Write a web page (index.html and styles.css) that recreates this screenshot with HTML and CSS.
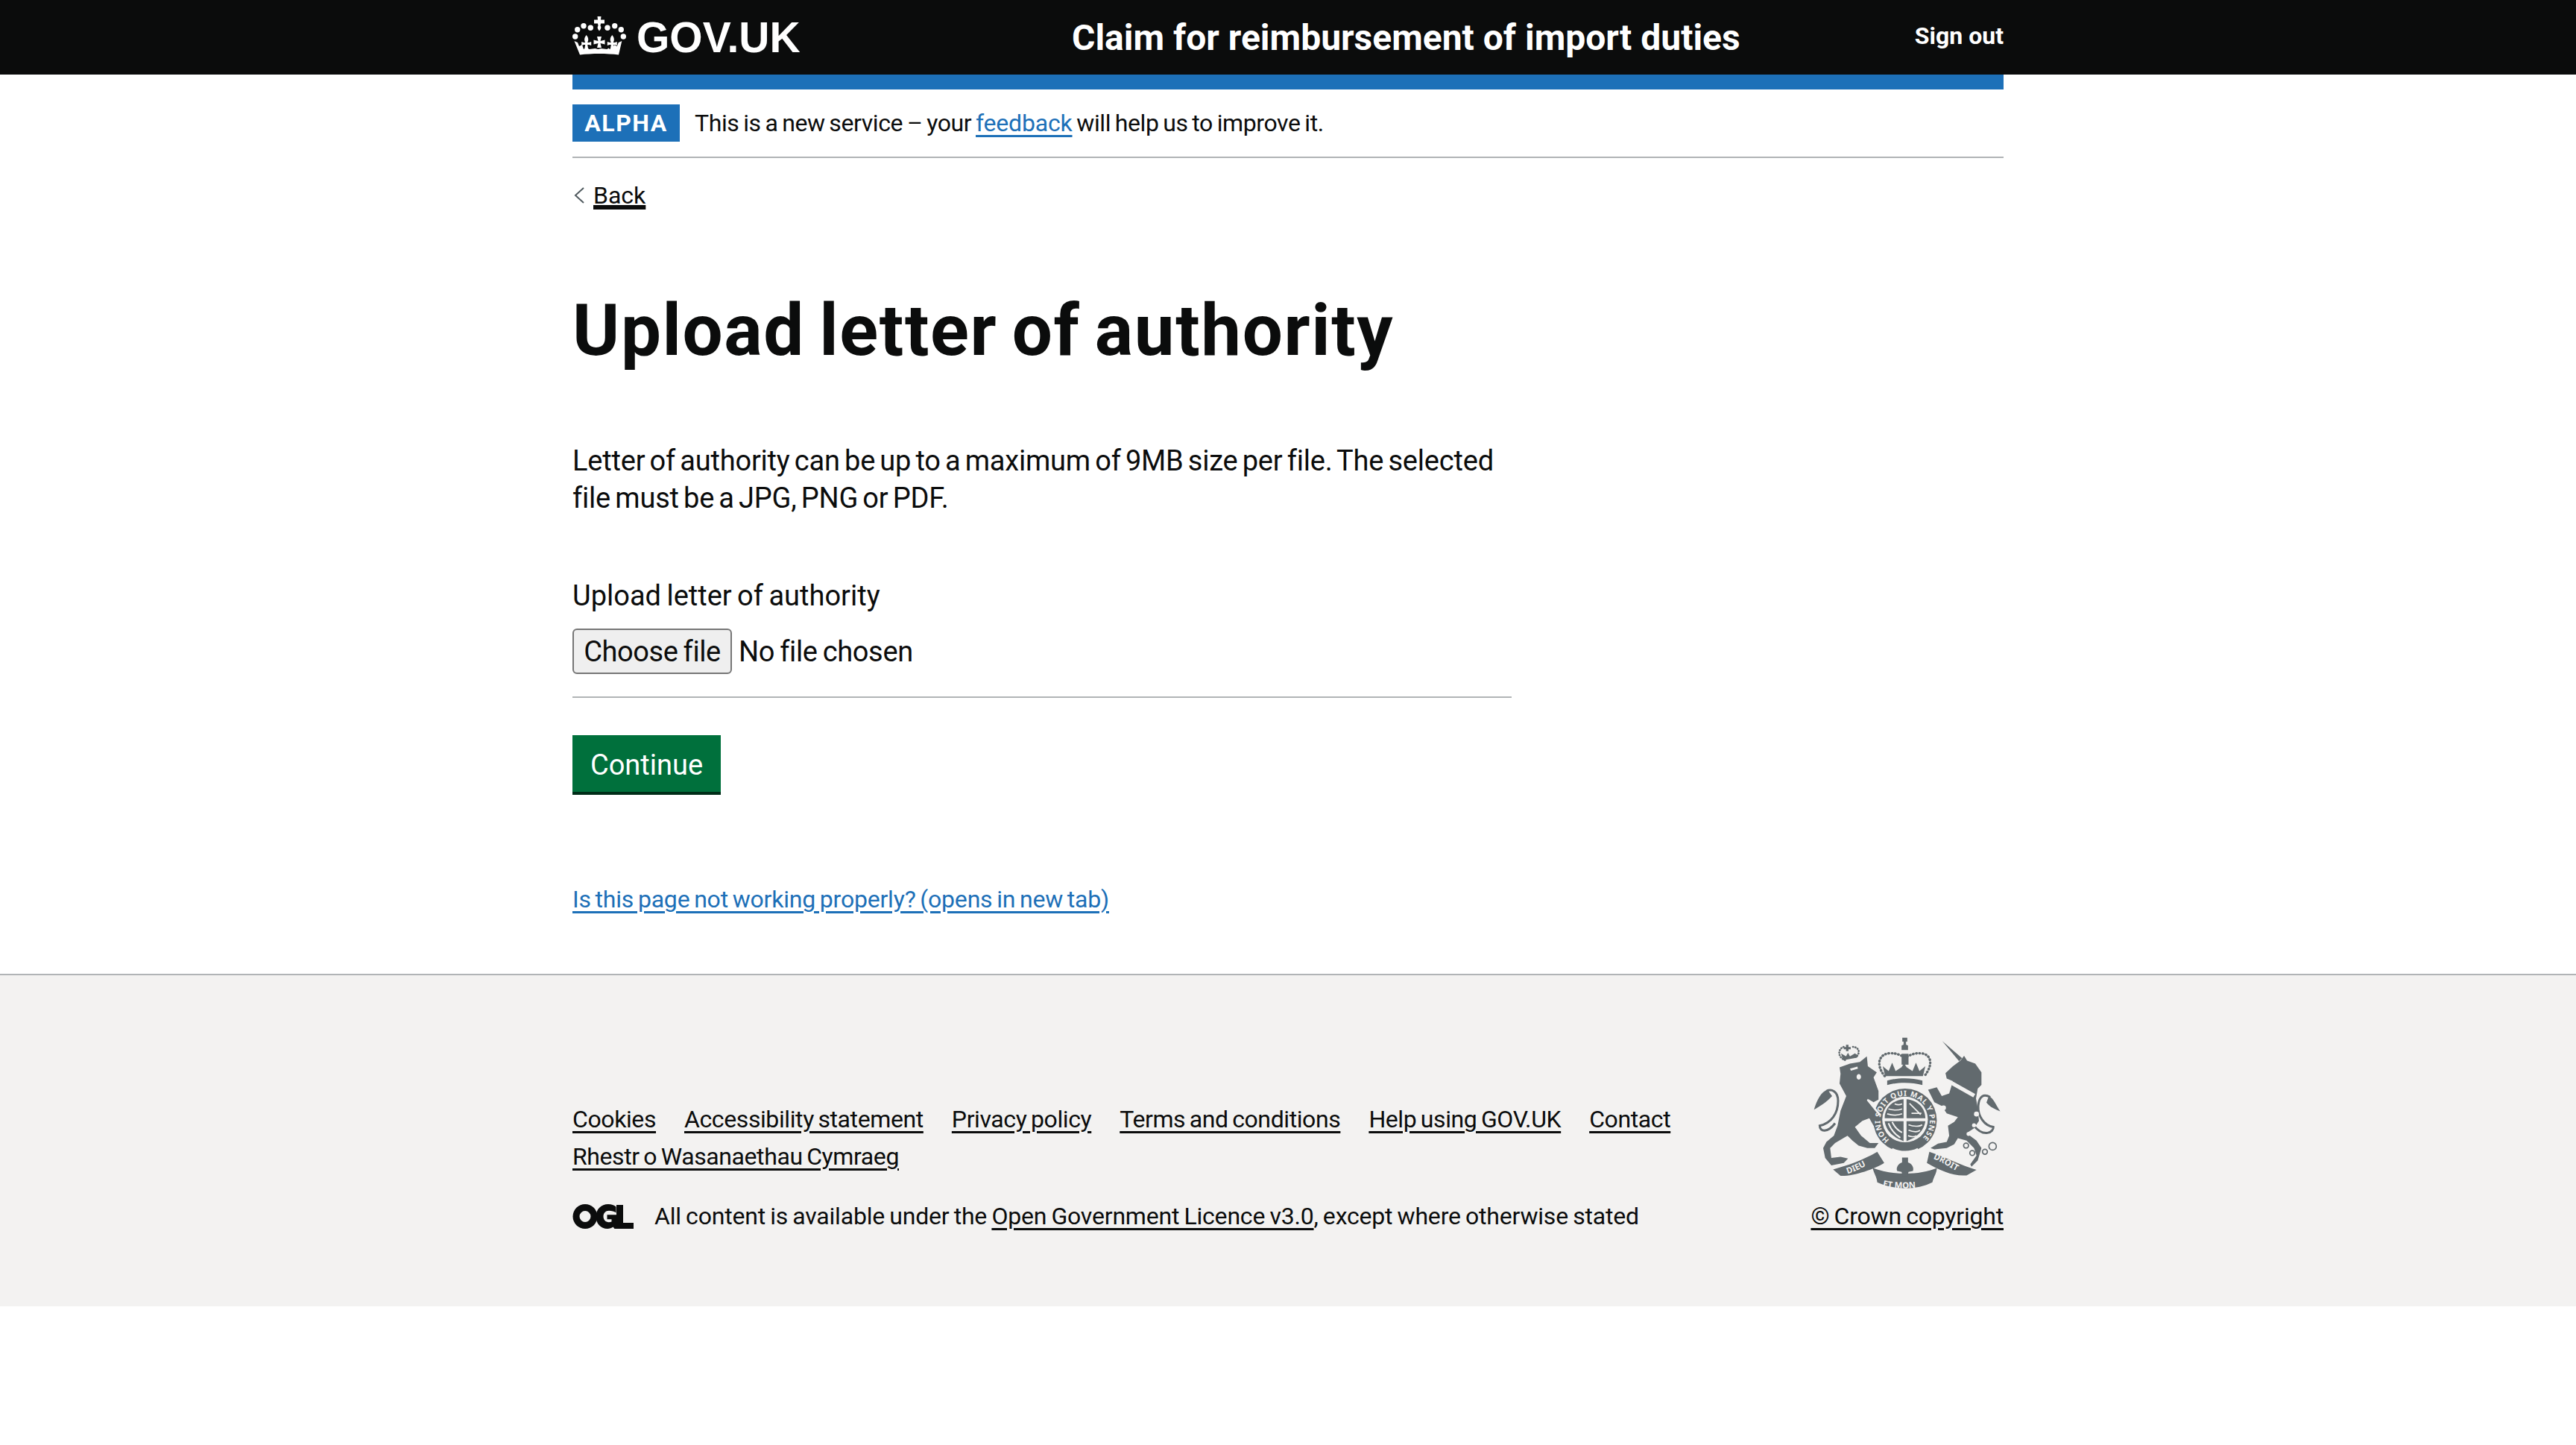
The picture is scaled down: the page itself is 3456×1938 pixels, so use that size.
FILE: index.html
```html
<!DOCTYPE html>
<html lang="en">
<head>
<meta charset="utf-8">
<title>Upload letter of authority</title>
<link rel="stylesheet" href="styles.css">
</head>
<body>
<header class="header">
  <div class="header-inner">
    <a class="logo" href="#">
      <svg class="crown" viewBox="0 0 72 52" aria-hidden="true">
        <g fill="#fff">
          <path d="M33.500 0h5l-.5 4.500h5v5h-5l-.5 3c1.500 2 1 4-1.500 7-2.500-3-3-5-1.500-7l-.5-3h-5v-5h5z"/>
          <circle cx="15" cy="12.700" r="3.700"/><circle cx="24.300" cy="15.300" r="3.700"/><circle cx="47" cy="15.300" r="3.700"/>
          <circle cx="56.700" cy="12.700" r="3.700"/><circle cx="6.700" cy="17.700" r="3.700"/><circle cx="65.300" cy="17.700" r="3.700"/>
          <circle cx="3.700" cy="27" r="3.700"/><circle cx="68.300" cy="27" r="3.700"/>
          <path d="M2.500 33 7 35l2 5 4-2 2 6 2-1.500 1.700 1.500 1.700-1.500 2 1.500 8-1 4 1 4-1 8 1 2-1.500 1.700 1.500 1.700-1.500 2 1.500 2-6 4 2 2-5 4.500-2L62 51.500c-16-2-36-2-52 0z"/>
          <path d="M18.700 25c2.500 3 3.500 6 1.500 10h2l3-1v5l-3-1h-2l1 6h-5l1-6h-2l-3 1v-5l3 1h2c-2-4-1-7 1.500-10z"/>
          <path d="M53.300 25c2.500 3 3.500 6 1.500 10h2l3-1v5l-3-1h-2l1 6h-5l1-6h-2l-3 1v-5l3 1h2c-2-4-1-7 1.500-10z"/>
          <path d="M33 27h6l-1.500 6 6-1.500v6l-6-1.500 1.500 6h-6l1.500-6-6 1.500v-6l6 1.500z"/>
        </g>
      </svg>
      <span class="logo-text">GOV.UK</span>
    </a>
    <a class="service" href="#">Claim for reimbursement of import duties</a>
    <a class="signout" href="#">Sign out</a>
  </div>
</header>

<div class="container">
  <div class="blue-bar"></div>
  <div class="phase">
    <strong class="tag">ALPHA</strong>
    <span class="phase-text">This is a new service – your <a class="link" href="#">feedback</a> will help us to improve it.</span>
  </div>
  <a class="back" href="#">
    <svg class="chevron" viewBox="0 0 14 22" aria-hidden="true"><path d="M13 1 2 11l11 10" fill="none" stroke="#505a5f" stroke-width="2"/></svg>
    <span>Back</span>
  </a>
  <main class="main">
    <h1 class="title">Upload letter of authority</h1>
    <div class="column">
      <p class="body">Letter of authority can be up to a maximum of 9MB size per file. The selected file must be a JPG, PNG or PDF.</p>
      <label class="label">Upload letter of authority</label>
      <div class="file-row">
        <button class="file-btn" type="button">Choose file</button>
        <span class="file-status">No file chosen</span>
      </div>
      <hr class="rule">
      <button class="continue" type="button">Continue</button>
    </div>
    <a class="help link" href="#">Is this page not working properly? (opens in new tab)</a>
  </main>
</div>

<footer class="footer">
  <div class="footer-inner">
    <div class="meta">
      <ul class="footer-links">
        <li><a href="#">Cookies</a></li>
        <li><a href="#">Accessibility statement</a></li>
        <li><a href="#">Privacy policy</a></li>
        <li><a href="#">Terms and conditions</a></li>
        <li><a href="#">Help using GOV.UK</a></li>
        <li><a href="#">Contact</a></li>
        <li><a href="#">Rhestr o Wasanaethau Cymraeg</a></li>
      </ul>
      <div class="licence">
        <svg class="ogl" viewBox="0 0 82 33" aria-hidden="true">
          <path fill="#0b0c0c" d="M17 0a16.500 16.500 0 1 0 0 33 16.500 16.500 0 0 0 0-33zm0 9a7.500 7.500 0 1 1 0 15 7.500 7.500 0 0 1 0-15z"/>
          <path fill="#0b0c0c" d="M48 0c4.500 0 8 1.400 10.500 3.500v8C56 9.800 52.500 8.800 49 8.800c-4.500 0-7.500 3.300-7.500 7.700s3 7.700 7.300 7.700c1.400 0 2.700-.3 3.700-.8v-3.200h-6v-6h14V33h-4l-2-2.500C52.500 32 50 33 47 33c-9 0-15.500-7-15.500-16.500S38.500 0 48 0z"/>
          <path fill="#0b0c0c" d="M59 1h9v24h14v8H59z"/>
        </svg>
        <span>All content is available under the <a href="#">Open Government Licence v3.0</a>, except where otherwise stated</span>
      </div>
    </div>
    <div class="copyright">
      <svg class="crest" viewBox="150 80 760 640" aria-hidden="true">
        <g fill="#626a6e">
          <path d="M284 114h10v9h9v9h-9v7h-10v-7h-9v-9h9z"/>
          <path d="M272 176l-8-28 20 12 8-14 8 14 20-12 14 10-6 8z"/>
          <path d="M258 205 300 190 340 183 368 160 372 200 408 225 395 245 415 300 415 335 395 345 372 332 408 385 430 420 425 440 395 440 378 410 350 420 320 445 345 480 380 510 415 510 400 530 370 530 335 520 310 500 290 480 240 510 220 530 225 570 262 565 292 572 275 590 225 600 200 570 192 530 205 505 235 480 250 440 262 380 285 320 258 270 262 230z"/>
          <path d="M210 295C185 300 165 340 155 375 180 360 205 345 228 320z"/>
          <path d="M513 85h18v16h-5v12l8 4v18h-26v-18l8-4v-12h-5v-16z"/>
          <path d="M508 150h28v44h-28z"/>
          <path d="M442 240l-10-40 24 20 14-34 14 34 24-16 10-16 10 16 24 16 14-34 14 34 24-20-10 40z"/>
          <path d="M450 258c40-12 100-12 142 0v18c-42-12-102-12-142 0z"/>
          <circle cx="522" cy="418" r="128"/>
          <path d="M232 616C290 600 350 580 410 545L438 590C400 615 310 645 262 642z"/>
          <path d="M392 610C395 630 408 645 410 668 480 700 570 700 632 668 640 640 650 630 650 610 580 640 470 640 392 610z"/>
          <path d="M610 590 620 545C680 565 750 600 810 618L770 640C720 645 660 620 610 590z"/>
          <path d="M510 568h24v20c15 5 25 20 20 34l-18 4-4 18h-20l-4-18-18-4c-5-14 5-29 20-34z"/>
          <path d="M685 228 715 200 745 178 760 158 772 178 805 190 830 225 830 275 815 290 808 330 815 370 820 420 800 450 770 470 810 500 830 530 815 580 790 605 785 595 810 560 800 530 770 500 735 490 720 515 690 530 640 535 625 530 655 512 690 505 700 480 695 440 720 425 735 405 690 390 670 360 640 345 615 295 650 285 670 320 700 310 715 260 690 250z"/>
          <path d="M672 99 752 168 740 180z"/>
          <path d="M860 320c20 10 30 40 46 62-20-8-40-15-56-35z"/>
        </g>
        <g fill="none" stroke="#626a6e">
          <path stroke-width="9" d="M240 430C210 470 178 465 178 440 225 430 252 390 252 340 252 300 225 290 205 300"/>
          <path stroke-width="9" d="M800 440C840 490 880 465 878 445 840 440 815 400 817 360 820 320 840 310 865 325"/>
          <g stroke-width="5">
            <circle cx="768" cy="520" r="10"/><circle cx="793" cy="550" r="10"/><circle cx="844" cy="545" r="10"/><circle cx="875" cy="523" r="15"/>
          </g>
          <path stroke-width="10" stroke-dasharray="2 11" stroke-linecap="round" d="M440 240C400 190 420 150 460 148 490 146 505 158 522 164 540 158 555 146 585 148 625 150 640 190 600 240"/>
          <path stroke-width="8" stroke-dasharray="1 9" stroke-linecap="round" d="M280 175C250 165 250 130 275 122M312 122C345 125 340 160 315 165"/>
        </g>
        <g fill="#f3f2f1">
          <circle cx="522" cy="415" r="92"/>
          <path d="M715 262l90 50-8 14-92-52z"/>
          <circle cx="800" cy="438" r="8"/><circle cx="778" cy="473" r="8"/><circle cx="810" cy="393" r="10"/>
          <circle cx="686" cy="284" r="10"/><circle cx="677" cy="368" r="10"/>
          <path d="M300 210l30-8 2 8-28 8zM335 232a9 11 0 1 0 1 0z"/>
          <path d="M372 332 425 395 418 400 368 338z"/>
          <path d="M472 530c30 15 72 15 100 0l8 12c-30 18-84 18-116 0z"/>
        </g>
        <g fill="#626a6e">
          <path d="M516 333v77h-76c0-40 30-73 76-77zM528 333c46 4 76 37 76 77h-76zM516 422v80c-40-14-70-40-76-80zM528 422h76c-6 40-36 66-76 80z"/>
        </g>
        <g stroke="#f3f2f1" fill="none">
          <path stroke-width="5" d="M455 372c20 6 40 6 55 0M450 392c20 6 45 6 60 0M480 352c10 4 22 4 30 0M536 436c20 8 45 8 55 0M536 458c20 8 40 8 46 0M534 480c12 5 26 5 34 0M540 350c15 15 30 30 45 45M548 390h40"/>
          <path stroke-width="6" d="M455 430c10 25 25 45 48 58M470 425c10 20 25 35 40 42"/>
        </g>
        <defs>
          <path id="ring-path" d="M459 497A100 100 0 1 1 585 497"/>
          <path id="ribbon-dieu" d="M290 634C320 625 360 605 400 580"/>
          <path id="ribbon-etmon" d="M432 684C480 695 560 695 612 682"/>
          <path id="ribbon-droit" d="M635 572C680 590 720 620 765 640"/>
        </defs>
        <g class="crest-text">
          <text class="crest-motto"><textPath href="#ring-path" textLength="480" lengthAdjust="spacing">HONI SOIT QUI MAL Y PENSE</textPath></text>
          <text class="crest-ribbon"><textPath href="#ribbon-dieu">DIEU</textPath></text>
          <text class="crest-ribbon"><textPath href="#ribbon-etmon">ET MON</textPath></text>
          <text class="crest-ribbon"><textPath href="#ribbon-droit">DROIT</textPath></text>
        </g>
      </svg>
      <a href="#">© Crown copyright</a>
    </div>
  </div>
</footer>
</body>
</html>
```

FILE: styles.css
```css
* { box-sizing: border-box; }

html, body {
  margin: 0;
  padding: 0;
  background: #fff;
  color: #0b0c0c;
  font-family: Roboto, "Noto Sans", Arial, sans-serif;
}

a { color: inherit; }

.header {
  height: 100px;
  background: #0b0c0c;
}

.header-inner {
  width: 1920px;
  height: 100%;
  margin: 0 auto;
  display: flex;
  align-items: center;
}

.logo {
  width: 640px;
  flex: none;
  display: flex;
  align-items: center;
  gap: 14px;
  color: #fff;
  text-decoration: none;
}

.crown { width: 72px; height: 52px; margin-top: -5px; }

.logo-text {
  font-family: "Liberation Sans", Arial, sans-serif;
  font-weight: 700;
  font-size: 57px;
  line-height: 1;
}

.service {
  margin-left: 30px;
  color: #fff;
  font-weight: 700;
  font-size: 48px;
  text-decoration: none;
}

.signout {
  margin-left: auto;
  color: #fff;
  font-weight: 700;
  font-size: 32px;
  text-decoration: none;
  margin-top: -4px;
}

.container {
  width: 1920px;
  margin: 0 auto;
}

.blue-bar {
  height: 20px;
  background: #1d70b8;
}

.phase {
  display: flex;
  align-items: center;
  gap: 20px;
  height: 92px;
  border-bottom: 2px solid #b1b4b6;
}

.tag {
  width: 144px;
  height: 50px;
  display: flex;
  align-items: center;
  justify-content: center;
  background: #1d70b8;
  color: #fff;
  font-size: 32px;
  font-weight: 700;
  letter-spacing: 1.5px;
}

.phase-text {
  font-size: 32px;
  letter-spacing: -0.4px;
  word-spacing: -1.8px;
}

.phase-text .link { letter-spacing: -0.2px; }

.link {
  color: #1d70b8;
  text-decoration-thickness: 3px;
  text-underline-offset: 5px;
}

.back {
  display: flex;
  align-items: center;
  gap: 12px;
  margin-top: 30px;
  height: 40px;
  width: max-content;
  margin-left: 2px;
  font-size: 32px;
}

.back span {
  text-decoration: underline;
  text-decoration-thickness: 3px;
  text-underline-offset: 5px;
}

.chevron { width: 14px; height: 22px; }

.main { padding-top: 106px; }

.title {
  margin: 0;
  font-size: 96px;
  line-height: 110px;
  font-weight: 700;
  letter-spacing: 1.6px;
  word-spacing: -6px;
}

.column { width: 1260px; margin-top: 95px; }

.body {
  margin: 0;
  font-size: 38px;
  line-height: 50px;
  letter-spacing: -0.2px;
  word-spacing: -3px;
}

.label {
  display: block;
  margin-top: 81px;
  font-size: 38px;
  line-height: 50px;
  word-spacing: -2px;
}

.file-row {
  display: flex;
  align-items: center;
  gap: 9px;
  margin-top: 19px;
}

.file-btn {
  width: 214px;
  height: 61px;
  padding: 0;
  border: 2px solid #767676;
  border-radius: 6px;
  background: #efefef;
  color: #0b0c0c;
  font-family: inherit;
  font-size: 38px;
  letter-spacing: -0.4px;
  word-spacing: -2px;
}

.file-status {
  font-size: 38px;
  letter-spacing: -0.35px;
  word-spacing: -2px;
}

.rule {
  height: 2px;
  margin: 30px 0 50px;
  border: 0;
  background: #b1b4b6;
}

.continue {
  display: block;
  width: 199px;
  height: 80px;
  padding: 0;
  border: 0;
  background: #00703c;
  box-shadow: inset 0 -4px 0 #002d18;
  color: #fff;
  font-family: inherit;
  font-size: 38px;
}

.help {
  display: block;
  width: max-content;
  margin-top: 120px;
  font-size: 32px;
  line-height: 40px;
  letter-spacing: -0.2px;
  word-spacing: -2px;
}

.footer {
  margin-top: 80px;
  height: 446px;
  padding-top: 82px;
  background: #f3f2f1;
  border-top: 2px solid #b1b4b6;
}

.footer-inner {
  width: 1920px;
  margin: 0 auto;
  display: flex;
  justify-content: space-between;
  align-items: flex-end;
  font-size: 32px;
  letter-spacing: -0.2px;
  word-spacing: -1.5px;
}

.footer a { text-decoration-thickness: 3px; text-underline-offset: 5px; }

.footer-links {
  margin: 0;
  padding: 0;
  list-style: none;
  display: flex;
  flex-wrap: wrap;
  column-gap: 38px;
  row-gap: 10px;
  width: 1560px;
  letter-spacing: -0.4px;
  word-spacing: -2px;
}

.footer-links li { line-height: 40px; }

.licence {
  display: flex;
  align-items: center;
  gap: 28px;
  margin-top: 40px;
  line-height: 40px;
}

.ogl { width: 82px; height: 33px; }

.copyright {
  display: flex;
  flex-direction: column;
  align-items: center;
  gap: 8px;
  line-height: 40px;
}

.crest { width: 253px; height: 213px; }

.crest-text {
  fill: #f3f2f1;
  font-family: "Noto Sans", sans-serif;
  font-weight: 700;
  letter-spacing: 0;
  word-spacing: 0;
}

.crest-motto { font-size: 30px; }
.crest-ribbon { font-size: 34px; }
```
